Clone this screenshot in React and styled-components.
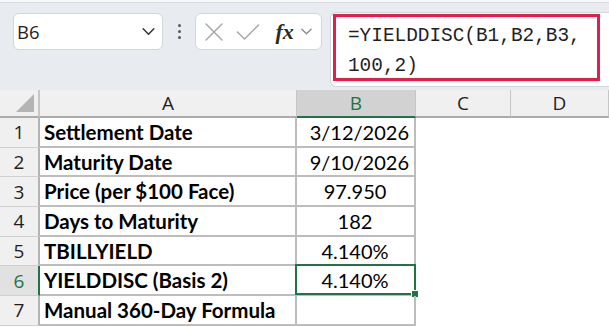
import React from "react";
import styled, { createGlobalStyle } from "styled-components";

const GlobalStyle = createGlobalStyle`
    html, body {
        margin: 0;
        padding: 0;
        background: #ffffff;
        overflow: hidden;
    }
    body {
        font-family: Lato, "Liberation Sans", sans-serif;
    }
`;

const Page = styled.div`
    width: 609px;
    height: 327px;
    display: flex;
    flex-direction: column;
`;

const Toolbar = styled.div`
    height: 90px;
    box-sizing: border-box;
    background-color: #e8ecf0;
    border-top: 2px solid #f6f7f9;
    box-shadow: inset 0 1px 0 #d8dce0;
    display: flex;
    align-items: flex-start;
    padding: 11px 0 0 13px;
`;

const NameBox = styled.div`
    width: 151px;
    height: 37px;
    box-sizing: border-box;
    background: #ffffff;
    border: 1px solid #d3d6da;
    border-radius: 6px;
    display: flex;
    align-items: center;
    justify-content: space-between;
    padding: 0 6px 0 3px;
    font-family: "Open Sans", "Liberation Sans", sans-serif;
    font-size: 18.5px;
    color: #1f1f1f;
`;

const Dots = styled.div`
    width: 32px;
    height: 37px;
    display: flex;
    flex-direction: column;
    align-items: center;
    justify-content: center;
    gap: 3px;
`;

const Dot = styled.span`
    width: 3px;
    height: 3px;
    border-radius: 50%;
    background: #555a60;
`;

const FxBox = styled.div`
    width: 127px;
    height: 37px;
    box-sizing: border-box;
    background: #ffffff;
    border: 1px solid #d3d6da;
    border-radius: 6px;
    display: flex;
    align-items: center;
    padding: 0 4px 0 8px;
    gap: 12px;
`;

const FxLabel = styled.span`
    font-family: "Liberation Serif", "DejaVu Serif", serif;
    font-style: italic;
    font-weight: 700;
    font-size: 22px;
    color: #2a2a2a;
    margin-left: 3px;
    margin-right: -6px;
`;

const FormulaBar = styled.div`
    position: relative;
    margin-left: 8px;
    margin-top: -1px;
    width: 280px;
    height: 75px;
    box-sizing: border-box;
    background: #ffffff;
    border: 1px solid #d3d6da;
    border-right: none;
    border-radius: 6px 0 0 6px;
    padding: 8px 0 0 17px;
    font-family: "Liberation Mono", "DejaVu Sans Mono", monospace;
    font-size: 19.4px;
    line-height: 30px;
    color: #1f1f1f;
    white-space: pre;
`;

const Highlight = styled.div`
    position: absolute;
    left: 2px;
    top: 1px;
    width: 267px;
    height: 67px;
    box-sizing: border-box;
    border: 3px solid #e0204a;
    pointer-events: none;
`;

const Sheet = styled.div`
    display: grid;
    grid-template-columns: 40px 257px 119px 95px 1fr;
    grid-template-rows: 28px repeat(7, 29.7px);
    background: #ffffff;
`;

const ColHead = styled.div`
    background: ${(p) => (p.$active ? "#d2d2d2" : "#f0f0f0")};
    color: ${(p) => (p.$active ? "#217346" : "#1f1f1f")};
    border-right: 1px solid #c6c6c6;
    border-bottom: ${(p) => (p.$active ? "2px solid #217346" : "2px solid #ababab")};
    box-sizing: border-box;
    display: flex;
    align-items: center;
    justify-content: center;
    font-family: "Open Sans", "Liberation Sans", sans-serif;
    font-size: 19px;
`;

const Corner = styled(ColHead)`
    position: relative;
    border-right: 2px solid #c6c6c6;
`;

const Triangle = styled.span`
    position: absolute;
    right: 4px;
    bottom: 4px;
    width: 0;
    height: 0;
    border-left: 18px solid transparent;
    border-bottom: 18px solid #b4b4b4;
`;

const RowHead = styled.div`
    background: ${(p) => (p.$active ? "#e1e1e1" : "#f0f0f0")};
    color: ${(p) => (p.$active ? "#217346" : "#1f1f1f")};
    border-bottom: 1px solid #d0d0d0;
    border-right: ${(p) => (p.$active ? "2px solid #217346" : "2px solid #b4b4b4")};
    box-sizing: border-box;
    display: flex;
    align-items: center;
    justify-content: center;
    font-family: "Open Sans", "Liberation Sans", sans-serif;
    font-size: 19px;
`;

const Cell = styled.div`
    position: relative;
    box-sizing: border-box;
    border-right: ${(p) => (p.$bordered ? "2px solid #bdbdbd" : "none")};
    border-bottom: ${(p) => (p.$bordered ? "2px solid #bdbdbd" : "none")};
    display: flex;
    align-items: center;
    justify-content: ${(p) => p.$align || "flex-start"};
    padding: 0 5px 0 4px;
    font-family: Lato, "Liberation Sans", sans-serif;
    font-weight: ${(p) => (p.$bold ? 700 : 400)};
    font-size: ${(p) => (p.$bold ? "20.5px" : "20px")};
    color: #000000;
`;

const Selection = styled.div`
    position: absolute;
    left: -2px;
    top: -2px;
    right: -2px;
    bottom: -1px;
    border: 2px solid #217346;
    pointer-events: none;
`;

const Handle = styled.span`
    position: absolute;
    right: -5px;
    bottom: -5px;
    width: 6px;
    height: 6px;
    background: #217346;
    border: 1px solid #ffffff;
`;

const Chevron = ({ size = 14, color = "#333" }) => (
    <svg width={size} height={size} viewBox="0 0 14 14" fill="none">
        <path d="M2 4.5 L7 9.5 L12 4.5" stroke={color} strokeWidth="1.4" strokeLinecap="round" strokeLinejoin="round" />
    </svg>
);

const CrossIcon = () => (
    <svg width="20" height="20" viewBox="0 0 20 20" fill="none">
        <path d="M2 2 L18 18 M18 2 L2 18" stroke="#a7a7a7" strokeWidth="1.5" strokeLinecap="round" />
    </svg>
);

const CheckIcon = () => (
    <svg width="24" height="20" viewBox="0 0 24 20" fill="none">
        <path d="M1.5 10 L8.5 17 L22.5 3" stroke="#a7a7a7" strokeWidth="1.5" strokeLinecap="round" strokeLinejoin="round" />
    </svg>
);

const columns = ["A", "B", "C", "D"];

const rows = [
    { label: "Settlement Date", value: "3/12/2026", align: "flex-end" },
    { label: "Maturity Date", value: "9/10/2026", align: "flex-end" },
    { label: "Price (per $100 Face)", value: "97.950", align: "center" },
    { label: "Days to Maturity", value: "182", align: "center" },
    { label: "TBILLYIELD", value: "4.140%", align: "center" },
    { label: "YIELDDISC (Basis 2)", value: "4.140%", align: "center", selected: true },
    { label: "Manual 360-Day Formula", value: "", align: "center" },
];

const App = () => {
    return (
        <Page>
            <GlobalStyle />
            <Toolbar>
                <NameBox>
                    <span>B6</span>
                    <Chevron size={15} />
                </NameBox>
                <Dots>
                    <Dot />
                    <Dot />
                    <Dot />
                </Dots>
                <FxBox>
                    <CrossIcon />
                    <CheckIcon />
                    <FxLabel>fx</FxLabel>
                    <Chevron size={13} color="#8a8a8a" />
                </FxBox>
                <FormulaBar>
                    {"=YIELDDISC(B1,B2,B3,\n100,2)"}
                    <Highlight />
                </FormulaBar>
            </Toolbar>
            <Sheet>
                <Corner>
                    <Triangle />
                </Corner>
                {columns.map((c) => (
                    <ColHead key={c} $active={c === "B"}>{c}</ColHead>
                ))}
                {rows.map((r, i) => (
                    <React.Fragment key={i}>
                        <RowHead $active={r.selected}>{i + 1}</RowHead>
                        <Cell $bordered $bold>{r.label}</Cell>
                        <Cell $bordered $align={r.align}>
                            {r.value}
                            {r.selected && (
                                <Selection>
                                    <Handle />
                                </Selection>
                            )}
                        </Cell>
                        <Cell />
                        <Cell />
                    </React.Fragment>
                ))}
            </Sheet>
        </Page>
    );
};

export default App;
